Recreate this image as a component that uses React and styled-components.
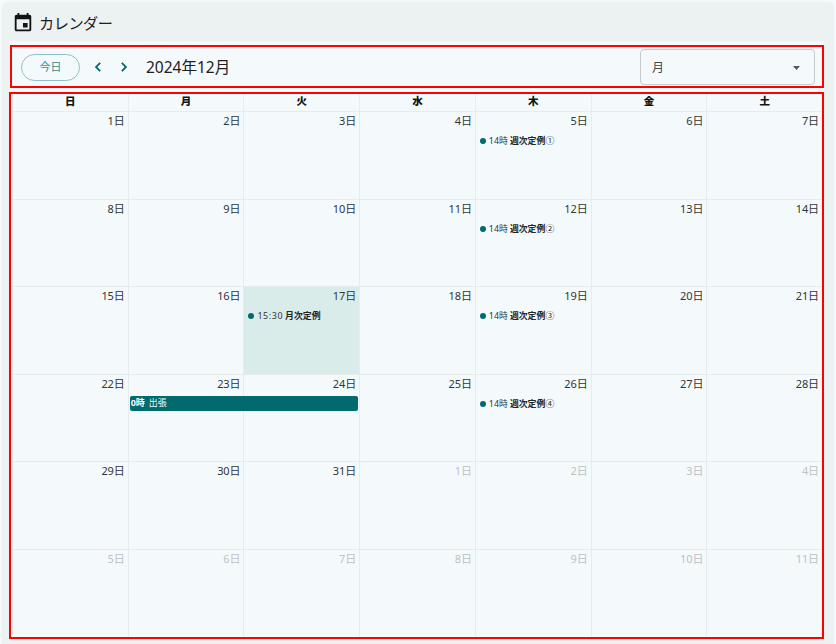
import React from "react";
import styled, { createGlobalStyle } from "styled-components";

const GlobalStyle = createGlobalStyle`
  * { box-sizing: border-box; }
  body {
    margin: 0;
    background: #f4fafc;
    color: #1c2021;
    font-family: "Noto Sans", "Noto Sans CJK JP", sans-serif;
  }
`;

const Page = styled.div`
  height: 644px;
  padding: 2px 2px 0;
  overflow: hidden;
`;

const Panel = styled.main`
  height: 642px;
  padding: 0 8px 0 7px;
  background: #ecf1f1;
  border-radius: 6px 6px 0 0;
`;

const Heading = styled.header`
  display: flex;
  align-items: center;
  gap: 5px;
  height: 39px;
  padding: 3px 0 0 3px;
`;

const Title = styled.h1`
  margin: 0;
  font-size: 15.2px;
  font-weight: 400;
  line-height: 24px;
  letter-spacing: -0.5px;
`;

const Surface = styled.section`
  width: 815px;
  padding-top: 4px;
  background: #f4fafc;
`;

const Toolbar = styled.div`
  display: flex;
  align-items: center;
  height: 43px;
  margin-left: 1px;
  padding: 0 7px 0 9px;
  border: 2px solid #fe0000;
`;

const TodayButton = styled.button`
  width: 59px;
  height: 27px;
  margin-top: 1px;
  padding: 0 0 2px;
  border: 1px solid #8fc0c3;
  border-radius: 14px;
  background: transparent;
  color: #3d898d;
  font: inherit;
  font-size: 11px;
`;

const ArrowButton = styled.button`
  display: flex;
  align-items: center;
  justify-content: center;
  width: 26px;
  height: 26px;
  padding: 0;
  border: 0;
  background: transparent;
  color: #006a6e;
`;

const Arrows = styled.div`
  display: flex;
  margin: 1px 0 0 5px;
`;

const Month = styled.h2`
  margin: 0 auto 0 9px;
  font-size: 15.5px;
  font-weight: 400;
  line-height: 24px;
`;

const Select = styled.div`
  display: flex;
  align-items: center;
  justify-content: space-between;
  width: 175px;
  height: 36px;
  padding: 0 14px 0 11px;
  border: 1px solid #c6cccd;
  border-radius: 4px;
  color: #444a4b;
  font-size: 12px;
`;

const SelectArrow = styled.svg`
  margin-top: 2px;
`;

const Calendar = styled.div`
  display: grid;
  grid-template-rows: 17px repeat(6, 87.5px);
  height: 547px;
  margin-top: 4px;
  padding-left: 1px;
  border: 2px solid #fe0000;
  overflow: hidden;
`;

const Week = styled.div`
  display: grid;
  grid-template-columns: repeat(7, minmax(0, 1fr));
  grid-template-rows: minmax(0, 1fr);
`;

const Weekday = styled.div`
  border-left: 1px solid #e8eeef;
  color: #101415;
  font-size: 10.5px;
  font-weight: 900;
  line-height: 15px;
  text-align: center;
`;

const Day = styled.div`
  grid-column: ${(p) => p.$column};
  grid-row: 1;
  padding: 1px 3px 0 4px;
  border-top: 1px solid #e6ecec;
  border-left: 1px solid #e6ecec;
  background: ${(p) => (p.$today ? "#daecea" : "transparent")};
`;

const DayNumber = styled.div`
  color: ${(p) => (p.$outside ? "#bdc2c4" : "#303536")};
  font-size: 11px;
  letter-spacing: -0.1px;
  line-height: 15px;
  text-align: right;
`;

const Event = styled.div`
  display: flex;
  align-items: center;
  height: 14px;
  margin-top: 6px;
  font-size: 8.9px;
  line-height: 14px;
  white-space: nowrap;
`;

const Dot = styled.span`
  width: 6px;
  height: 6px;
  margin-right: 3px;
  border-radius: 50%;
  background: #006a6e;
`;

const Time = styled.span`
  margin-right: 2px;
  color: #303637;
  letter-spacing: ${(p) => (p.$wide ? "0.6px" : "0")};
`;

const EventName = styled.b`
  color: #202526;
  font-weight: 700;
`;

const EventNumber = styled.span`
  color: #202526;
`;

const SpanEvent = styled.div`
  z-index: 1;
  grid-column: 2 / 4;
  grid-row: 1;
  height: 15px;
  margin: 22px 1px 0 2px;
  padding-left: 1px;
  border-radius: 2px;
  background: #006a6e;
  color: #f4fafc;
  font-size: 9px;
  line-height: 13px;
`;

const SpanTime = styled.b`
  margin-right: 4px;
`;

const weekdays = ["日", "月", "火", "水", "木", "金", "土"];

const events = {
  4: ["14時", "週次定例", "①"],
  11: ["14時", "週次定例", "②"],
  16: ["15:30", "月次定例"],
  18: ["14時", "週次定例", "③"],
  25: ["14時", "週次定例", "④"],
};

function CalendarIcon() {
  return (
    <svg width="22" height="22" viewBox="0 0 24 24" fill="#101415">
      <path d="M17 12h-5v5h5v-5zM16 1v2H8V1H6v2H5c-1.11 0-1.99.9-1.99 2L3 19c0 1.1.89 2 2 2h14c1.1 0 2-.9 2-2V5c0-1.1-.9-2-2-2h-1V1h-2zm3 18H5V8h14v11z" />
    </svg>
  );
}

function Chevron({ path }) {
  return (
    <svg
      width="18"
      height="18"
      viewBox="0 0 24 24"
      fill="currentColor"
      stroke="currentColor"
      strokeWidth="0.6"
    >
      <path d={path} />
    </svg>
  );
}

function DayCell({ index }) {
  const event = events[index];
  return (
    <Day $column={(index % 7) + 1} $today={index === 16}>
      <DayNumber $outside={index > 30}>{(index % 31) + 1}日</DayNumber>
      {event && (
        <Event>
          <Dot />
          <Time $wide={event[0].includes(":")}>{event[0]}</Time>
          <EventName>{event[1]}</EventName>
          {event[2] && <EventNumber>{event[2]}</EventNumber>}
        </Event>
      )}
    </Day>
  );
}

export default function App() {
  return (
    <Page>
      <GlobalStyle />
      <Panel>
        <Heading>
          <CalendarIcon />
          <Title>カレンダー</Title>
        </Heading>
        <Surface>
          <Toolbar>
            <TodayButton>今日</TodayButton>
            <Arrows>
              <ArrowButton aria-label="前の月">
                <Chevron path="M15.4 7.4 14 6l-6 6 6 6 1.4-1.4-4.6-4.6z" />
              </ArrowButton>
              <ArrowButton aria-label="次の月">
                <Chevron path="M10 6 8.6 7.4l4.6 4.6-4.6 4.6L10 18l6-6z" />
              </ArrowButton>
            </Arrows>
            <Month>2024年12月</Month>
            <Select>
              月
              <SelectArrow width="7" height="4" viewBox="0 0 7 4" fill="#535a5b">
                <path d="M0 0h7L3.5 4z" />
              </SelectArrow>
            </Select>
          </Toolbar>
          <Calendar>
            <Week>
              {weekdays.map((name) => (
                <Weekday key={name}>{name}</Weekday>
              ))}
            </Week>
            {[0, 1, 2, 3, 4, 5].map((week) => (
              <Week key={week}>
                {weekdays.map((name, i) => (
                  <DayCell key={name} index={week * 7 + i} />
                ))}
                {week === 3 && (
                  <SpanEvent>
                    <SpanTime>0時</SpanTime>出張
                  </SpanEvent>
                )}
              </Week>
            ))}
          </Calendar>
        </Surface>
      </Panel>
    </Page>
  );
}
